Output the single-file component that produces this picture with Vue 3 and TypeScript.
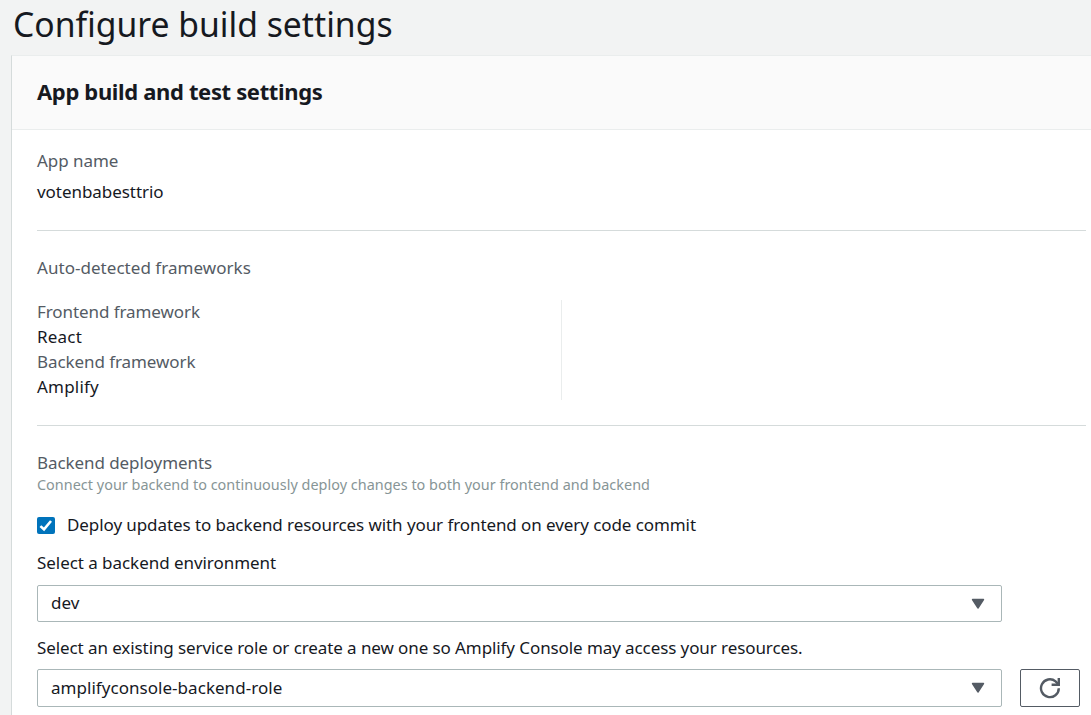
<script setup lang="ts">
import { ref } from 'vue'

interface Framework {
  label: string
  value: string
}

const appName = 'votenbabesttrio'
const frameworks: Framework[] = [
  { label: 'Frontend framework', value: 'React' },
  { label: 'Backend framework', value: 'Amplify' },
]
const deployBackend = ref(true)
const environment = ref('dev')
const role = ref('amplifyconsole-backend-role')
</script>

<template>
  <main class="page">
    <h1 class="title">Configure build settings</h1>
    <section class="card">
      <header class="card-header">
        <h2>App build and test settings</h2>
      </header>
      <div class="card-body">
        <div class="group app">
          <div class="label app-label">App name</div>
          <div class="value app-value">{{ appName }}</div>
        </div>

        <div class="group detected">
          <div class="label detected-label">Auto-detected frameworks</div>
          <div class="columns">
            <div class="column details">
              <template v-for="item in frameworks" :key="item.label">
                <div class="label fw-label">{{ item.label }}</div>
                <div class="value fw-value">{{ item.value }}</div>
              </template>
            </div>
            <div class="column empty"></div>
          </div>
        </div>

        <div class="deployments">
          <div class="label dep-label">Backend deployments</div>
          <div class="hint">Connect your backend to continuously deploy changes to both your frontend and backend</div>
          <div class="check-row" @click="deployBackend = !deployBackend">
            <span class="checkbox" :class="{ checked: deployBackend }">
              <svg v-if="deployBackend" viewBox="0 0 18 17" width="18" height="17">
                <path d="M3.4 9.1 7 12.3 14 4" fill="none" stroke="#fff" stroke-width="2.6" />
              </svg>
            </span>
            <span class="value check-text">Deploy updates to backend resources with your frontend on every code commit</span>
          </div>
          <div class="value env-label">Select a backend environment</div>
          <div class="select env">
            <span class="value">{{ environment }}</span>
            <svg viewBox="0 0 14 12" width="14" height="12">
              <path d="M1.5 1.5h11L7 10z" fill="#545b64" stroke="#545b64" stroke-width="1.4" stroke-linejoin="round" />
            </svg>
          </div>
          <div class="value role-label">Select an existing service role or create a new one so Amplify Console may access your resources.</div>
          <div class="role-row">
            <div class="select role">
              <span class="value role-value">{{ role }}</span>
              <svg viewBox="0 0 14 12" width="14" height="12">
                <path d="M1.5 1.5h11L7 10z" fill="#545b64" stroke="#545b64" stroke-width="1.4" stroke-linejoin="round" />
              </svg>
            </div>
            <button class="refresh" type="button" aria-label="Refresh">
              <svg viewBox="0 0 22 22" width="22" height="22" fill="none" stroke="#545b64" stroke-width="2.4">
                <path d="M19.8 11.2A8.9 8.9 0 1 1 16.6 4.4l2.4 2.4" />
                <path d="M19.8 1v6.8h-7.2" />
              </svg>
            </button>
          </div>
        </div>
      </div>
    </section>
  </main>
</template>

<style>
body {
  background: #f2f3f3;
  overflow: hidden;
}
</style>

<style scoped>
.page {
  box-sizing: border-box;
  height: 715px;
  overflow: hidden;
  padding-left: 11px;
  background: #f2f3f3;
  color: #16191f;
  font-family: "Noto Sans", "Open Sans", sans-serif;
  font-size: 17px;
  line-height: 25px;
  white-space: nowrap;
}
.title {
  margin: 0;
  height: 55px;
  padding-left: 2px;
  font-size: 33.7px;
  line-height: 48px;
  font-weight: 400;
}
.card {
  box-sizing: border-box;
  height: 680px;
  border-left: 1px solid #d5dbdb;
  border-top: 1px solid #eaeded;
  background: #fff;
}
.card-header {
  height: 73px;
  padding-left: 25px;
  border-bottom: 1px solid #eaeded;
  background: #fafafa;
}
h2 {
  margin: 0;
  font-size: 22px;
  line-height: 70px;
  font-weight: 700;
  letter-spacing: -0.35px;
}
.card-body {
  padding: 18px 5px 0 25px;
}
.label {
  color: #545b64;
}
.group {
  box-sizing: border-box;
  border-bottom: 1px solid #d5dbdb;
}
.app {
  height: 83px;
}
.app-label,
.app-value {
  letter-spacing: -0.05px;
}
.app-value {
  margin-top: 6px;
}
.detected {
  height: 195px;
  padding-top: 24px;
}
.detected-label {
  letter-spacing: 0.04px;
}
.columns {
  display: grid;
  grid-template-columns: 524px 1fr;
  height: 100px;
  margin-top: 20px;
}
.details {
  margin-top: -1px;
}
.fw-label,
.dep-label {
  letter-spacing: -0.08px;
}
.fw-value {
  letter-spacing: 0.2px;
}
.empty {
  border-left: 1px solid #eaeded;
}
.deployments {
  padding-top: 24px;
}
.hint {
  color: #879596;
  font-size: 14.4px;
  line-height: 20px;
  letter-spacing: 0.03px;
}
.check-row {
  display: flex;
  height: 25px;
  margin-top: 17px;
}
.check-text {
  letter-spacing: -0.08px;
}
.checkbox {
  box-sizing: border-box;
  width: 18px;
  height: 17px;
  margin: 5px 12px 0 0;
  border: 1px solid #aab7b8;
  border-radius: 2px;
}
.checkbox.checked {
  border: 0;
  background: #0073bb;
}
.checkbox svg {
  display: block;
}
.env-label {
  margin-top: 13px;
  letter-spacing: -0.05px;
}
.select {
  box-sizing: border-box;
  display: flex;
  align-items: center;
  justify-content: space-between;
  width: 965px;
  height: 37px;
  padding: 0 16px 0 13px;
  border: 1px solid #aab7b8;
  border-radius: 2px;
}
.select .value {
  padding-bottom: 2px;
}
.env {
  margin-top: 10px;
}
.role-label {
  margin-top: 13px;
  letter-spacing: -0.09px;
}
.role-value {
  letter-spacing: 0.04px;
}
.role-row {
  display: flex;
  gap: 18px;
  margin-top: 9px;
}
.role {
  height: 38px;
}
.refresh {
  box-sizing: border-box;
  display: flex;
  align-items: center;
  justify-content: center;
  width: 60px;
  height: 38px;
  padding: 0;
  border: 1px solid #545b64;
  border-radius: 2px;
  background: #fff;
}
</style>
